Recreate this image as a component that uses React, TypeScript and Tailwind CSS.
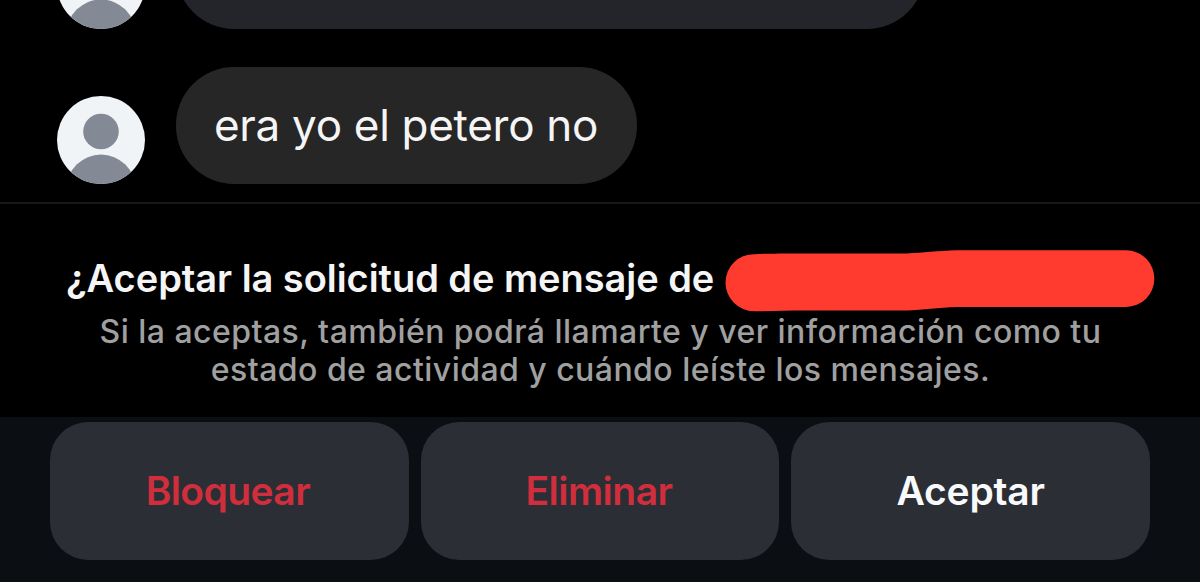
import clsx from "clsx";

type Action = { label: string; className: string };

const actions: Action[] = [
	{ label: "Bloquear", className: "text-[#d02e3c] tracking-[-0.6px] pr-[3px]" },
	{ label: "Eliminar", className: "text-[#d02e3c] tracking-[-0.5px] pr-[2px]" },
	{ label: "Aceptar", className: "text-[#f7f9fb] tracking-[-0.2px]" },
];

function Avatar() {
	return (
		<svg viewBox="0 0 88 88" className="size-[88px] shrink-0">
			<defs>
				<clipPath id="avatar-clip">
					<circle cx="44" cy="44" r="44" />
				</clipPath>
			</defs>
			<g clipPath="url(#avatar-clip)">
				<rect width="88" height="88" fill="#f1f4f7" />
				<circle cx="44" cy="35.5" r="17.8" fill="#848996" />
				<circle cx="44" cy="93" r="34.5" fill="#848996" />
			</g>
		</svg>
	);
}

// hand-drawn marker stroke that hides the user name
function Redaction() {
	return (
		<svg viewBox="0 0 430 62" className="h-[62px] w-[430px] shrink-0">
			<path
				d="M29 4.2C43 3.2 70 3.4 100 3.4H182C198 2.8 213 .9 232 .3H401A28.3 28.3 0 0 1 401 57H232C213 57.6 198 59.8 182 60.5H80C62 60.5 45 61.3 29 61.2A28.5 28.5 0 0 1 29 4.2Z"
				fill="#ff3b30"
			/>
		</svg>
	);
}

export default function App() {
	return (
		<div className="flex h-[582px] w-[1200px] flex-col overflow-hidden bg-black font-['Inter',sans-serif]">
			<main className="flex h-[202px] shrink-0 flex-col justify-end gap-[38px] overflow-hidden pb-[18px] pl-[57px]">
				<div className="flex shrink-0 items-end gap-[31px]">
					<Avatar />
					<div className="h-[117px] w-[749px] rounded-[58px] bg-[#24252a]" />
				</div>
				<div className="flex shrink-0 items-end gap-[31px]">
					<Avatar />
					<div className="flex h-[117px] w-[461px] items-center rounded-[58px] bg-[#262626] pb-[2px] pl-[38px]">
						<span className="whitespace-nowrap text-[44px] leading-[60px] tracking-[-0.3px] text-[#f5f5f5]">era yo el petero no</span>
					</div>
				</div>
			</main>

			<section className="flex h-[215px] shrink-0 flex-col border-t-2 border-[#181818] pt-[46px]">
				<div className="flex h-[62px] items-start pl-[66px]">
					<h1 className="w-[659px] shrink-0 whitespace-nowrap pt-[4px] text-[38px] font-semibold leading-[48px] tracking-[-0.05px] text-[#f5f5f5]">¿Aceptar la solicitud de mensaje de</h1>
					<Redaction />
				</div>
				<p className="flex flex-col items-center whitespace-nowrap pt-[1px] pl-[1px] text-[32px] font-medium leading-[38px] tracking-[0.46px] text-[#a0a0a0]">
					<span>Si la aceptas, también podrá llamarte y ver información como tu</span>
					<span>estado de actividad y cuándo leíste los mensajes.</span>
				</p>
			</section>

			<footer className="grid flex-1 grid-cols-3 items-start gap-[12px] bg-[#0b0e13] px-[50px] pt-[5px]">
				{actions.map((action) => (
					<button key={action.label} className={clsx("h-[138px] rounded-[38px] bg-[#2b2e35] text-[39px] font-semibold leading-[48px]", action.className)}>
						{action.label}
					</button>
				))}
			</footer>
		</div>
	);
}
